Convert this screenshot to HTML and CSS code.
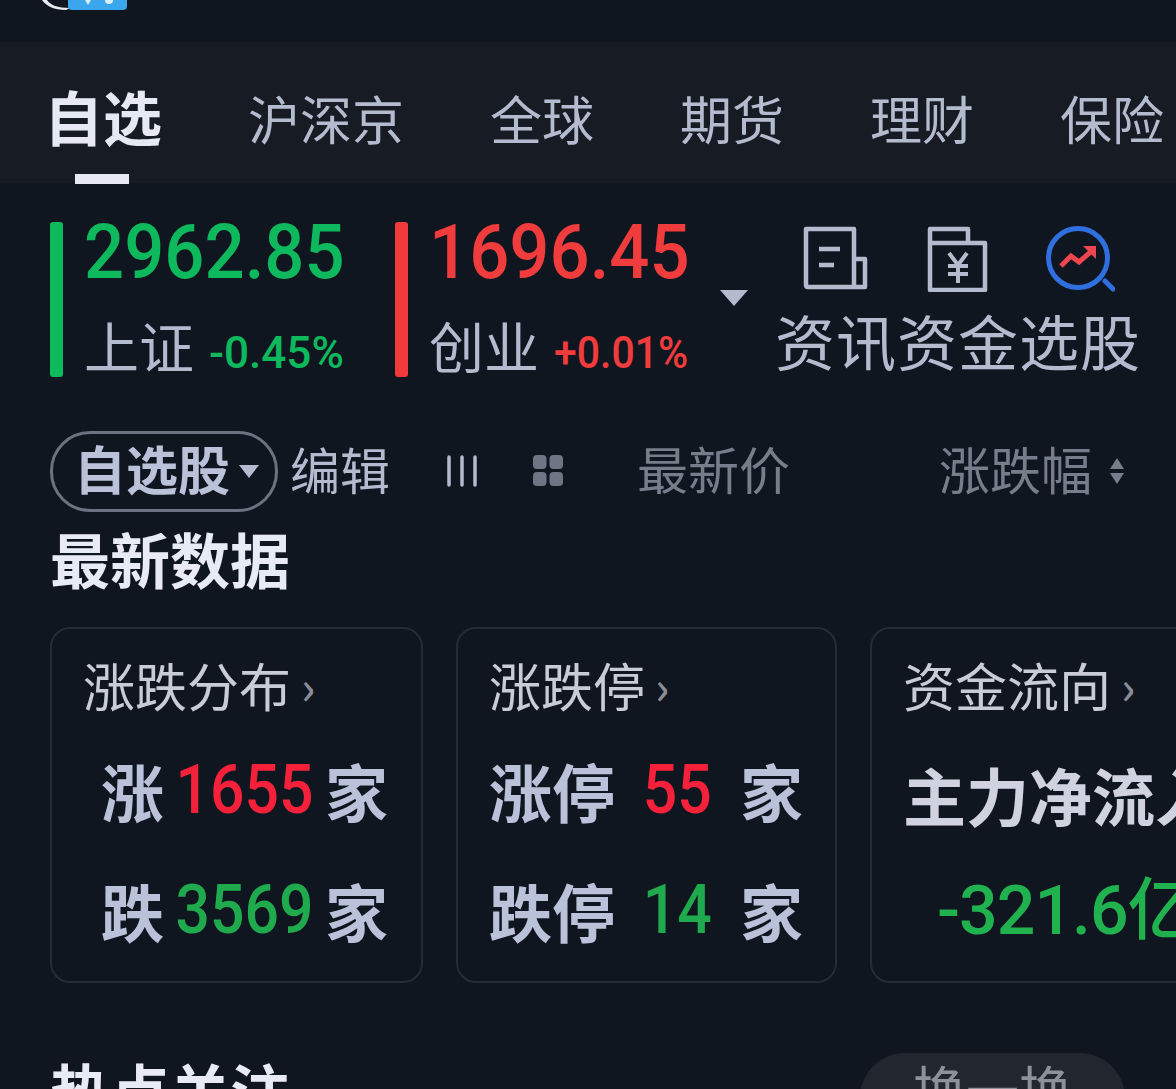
FILE: index.html
```html
<!DOCTYPE html>
<html lang="zh-CN">
<head>
  <meta charset="UTF-8" />
  <meta name="viewport" content="width=device-width, initial-scale=1.0" />
  <title>自选</title>
  <link rel="stylesheet" href="styles.css">
</head>
<body>
  <div class="page">
    <!-- top strip, logo is cut off by the screen edge -->
    <div class="topbar">
      <svg class="logo" width="90" height="12" viewBox="0 0 90 12">
        <path d="M2 0C6 6 14 10 26 10L30 8C18 8 10 5 7 0Z" fill="#e8eaf0"/>
        <path d="M28 0H87V6Q87 10 83 10H32Q28 10 28 6Z" fill="#3aa6ee"/>
        <path d="M45 0L48 5L51 0Z" fill="#d8eefc"/>
        <circle cx="69" cy="0" r="4" fill="#d8eefc"/>
      </svg>
    </div>

    <div class="tabs">
      <div class="tab active">自选</div>
      <div class="tab">沪深京</div>
      <div class="tab">全球</div>
      <div class="tab">期货</div>
      <div class="tab">理财</div>
      <div class="tab">保险</div>
    </div>

    <div class="quotes">
      <div class="index">
        <div class="bar bar-green"></div>
        <div>
          <div class="price green">2962.85</div>
          <div class="index-sub"><span class="index-name">上证</span><span class="pct green">-0.45%</span></div>
        </div>
      </div>
      <div class="index">
        <div class="bar bar-red"></div>
        <div>
          <div class="price red">1696.45</div>
          <div class="index-sub"><span class="index-name">创业</span><span class="pct red">+0.01%</span></div>
        </div>
      </div>
      <div class="more-arrow"></div>
      <div class="shortcuts">
        <div class="shortcut">
          <svg width="66" height="66" viewBox="0 0 66 66" fill="none" stroke="#b4bbce" stroke-width="4.500" stroke-linejoin="round">
            <path d="M3 3H51V61H5Q3 61 3 59Z"/>
            <path d="M51 33H62V61H51"/>
            <path d="M16 23H37M16 39H31"/>
          </svg>
          <span>资讯</span>
        </div>
        <div class="shortcut">
          <svg width="66" height="66" viewBox="0 0 66 66" fill="none" stroke="#b4bbce" stroke-width="4.500" stroke-linejoin="round">
            <path d="M5 17V3H43V17"/>
            <path d="M5 17H60V64H5Z"/>
            <path d="M24 27L33 39L42 27M23 40H43M23 48H43M33 39V57" stroke-width="4"/>
          </svg>
          <span>资金</span>
        </div>
        <div class="shortcut">
          <svg width="70" height="66" viewBox="0 0 70 66" fill="none">
            <circle cx="33" cy="32" r="29.500" stroke="#2f6fe0" stroke-width="5"/>
            <path d="M60 55L68 63" stroke="#2f6fe0" stroke-width="5" stroke-linecap="round"/>
            <path d="M16 40L26 30L34 36L49 23" stroke="#ee4650" stroke-width="5"/>
            <path d="M38 20H51V33Z" fill="#ee4650"/>
          </svg>
          <span>选股</span>
        </div>
      </div>
    </div>

    <div class="toolbar">
      <div class="pill">自选股<i class="pill-arrow"></i></div>
      <div class="edit">编辑</div>
      <svg class="icon-lines" width="32" height="32" viewBox="0 0 32 32" stroke="#b4bbce" stroke-width="3.500" stroke-linecap="round">
        <path d="M3 2V30M16 2V30M29 2V30"/>
      </svg>
      <svg class="icon-grid" width="30" height="32" viewBox="0 0 30 32" fill="#6f7585">
        <rect width="13.500" height="14" rx="4"/>
        <rect x="16.500" width="13.500" height="14" rx="4"/>
        <rect y="17" width="13.500" height="14" rx="4"/>
        <rect x="16.500" y="17" width="13.500" height="14" rx="4"/>
      </svg>
      <div class="col-head col-price">最新价</div>
      <div class="col-head col-change">涨跌幅</div>
      <div class="sort"><i class="sort-up"></i><i class="sort-down"></i></div>
    </div>

    <h2 class="section-title">最新数据</h2>

    <div class="cards">
      <div class="card card-dist">
        <div class="card-title">涨跌分布<span class="chev">›</span></div>
        <div class="row"><b>涨</b><span class="num num-red">1655</span><b>家</b></div>
        <div class="row"><b>跌</b><span class="num num-green">3569</span><b>家</b></div>
      </div>
      <div class="card card-limit">
        <div class="card-title">涨跌停<span class="chev">›</span></div>
        <div class="row"><b>涨停</b><span class="num num-red">55</span><b>家</b></div>
        <div class="row"><b>跌停</b><span class="num num-green">14</span><b>家</b></div>
      </div>
      <div class="card card-flow">
        <div class="card-title">资金流向<span class="chev">›</span></div>
        <div class="flow-label">主力净流入</div>
        <div class="flow-value">-321.6亿</div>
      </div>
    </div>

    <div class="hot">
      <h2 class="section-title">热点关注</h2>
      <div class="swap">换一换</div>
    </div>
  </div>
</body>
</html>
```
FILE: styles.css
```css
* { margin: 0; padding: 0; box-sizing: border-box; }
html, body {
  height: 100%;
  overflow: hidden;
  background: #10161f;
  font-family: "Noto Sans CJK SC", "Noto Sans", sans-serif;
  color: #b4bbce;
}
.page {
  width: 1176px;
  height: 1089px;
  overflow: hidden;
}

/* top strip */
.topbar {
  height: 42px;
  padding-left: 40px;
}
.logo { display: block; }

/* tabs */
.tabs {
  height: 141px;
  background: #171b24;
  display: flex;
  align-items: center;
  gap: 86px;
  padding: 10px 0 0 44px;
  white-space: nowrap;
}
.tab {
  position: relative;
  font-size: 52px;
  line-height: 70px;
  color: #b4bbce;
  flex: none;
}
.tab.active {
  font-size: 59px;
  font-weight: 700;
  color: #e6e8f4;
  margin-top: -4px;
}
.tab.active::after {
  content: "";
  position: absolute;
  left: 31px;
  top: 93px;
  width: 54px;
  height: 10px;
  background: #e6e8f4;
}

/* index quotes */
.quotes {
  display: flex;
  padding: 39px 0 0 50px;
  height: 247px;
}
.index {
  display: flex;
  gap: 21px;
  width: 345px;
}
.bar {
  width: 13px;
  height: 155px;
  border-radius: 3px;
  flex: none;
}
.bar-green { background: #0dbb5c; }
.bar-red { background: #f13a3a; }
.price {
  font-family: Roboto, sans-serif;
  font-size: 76px;
  font-weight: 500;
  line-height: 60px;
  white-space: nowrap;
  transform: scaleX(.93);
  transform-origin: left center;
}
.green { color: #0eb95d; }
.red { color: #f03c3c; }
.index-sub {
  display: flex;
  align-items: baseline;
  margin-top: 29px;
  gap: 15px;
}
.index-name {
  font-size: 55px;
  line-height: 66px;
  color: #b4bbce;
}
.pct {
  font-family: Roboto, sans-serif;
  font-size: 45px;
  font-weight: 500;
  white-space: nowrap;
  transform: scaleX(.98);
  transform-origin: left center;
}
.pct.red { transform: scaleX(.91); }
.more-arrow {
  width: 0;
  height: 0;
  margin: 68px 0 0 -20px;
  border-left: 14px solid transparent;
  border-right: 14px solid transparent;
  border-top: 16px solid #b4bbce;
}
.shortcuts {
  display: flex;
  margin-left: 27px;
  margin-top: 4px;
}
.shortcut {
  width: 122px;
  display: flex;
  flex-direction: column;
  align-items: center;
  font-size: 60px;
  line-height: 76px;
  white-space: nowrap;
}
.shortcut svg { margin-bottom: 10px; }
.shortcut span { letter-spacing: 1px; }

/* toolbar under quotes */
.toolbar {
  display: flex;
  align-items: center;
  height: 82px;
  margin-bottom: 6px;
  padding-left: 50px;
}
.pill {
  width: 228px;
  height: 81px;
  border: 3px solid #6c7280;
  border-radius: 40px;
  display: flex;
  align-items: center;
  padding: 0 0 8px 21px;
  font-size: 52px;
  font-weight: 700;
  color: #b9c2d8;
  flex: none;
}
.pill-arrow {
  margin: 8px 0 0 9px;
  border-left: 10px solid transparent;
  border-right: 10px solid transparent;
  border-top: 13px solid #b4bbce;
}
.edit {
  font-size: 50px;
  margin: 0 0 6px 12px;
  flex: none;
}
.icon-lines { margin-left: 56px; flex: none; }
.icon-grid { margin-left: 55px; flex: none; }
.col-head {
  font-size: 51px;
  color: #777d8b;
  margin-bottom: 6px;
  flex: none;
}
.col-price { margin-left: 74px; }
.col-change { margin-left: 149px; }
.sort { margin-left: 18px; display: flex; flex-direction: column; gap: 4px; }
.sort-up {
  border-left: 7px solid transparent;
  border-right: 7px solid transparent;
  border-bottom: 11px solid #777d8b;
}
.sort-down {
  border-left: 7px solid transparent;
  border-right: 7px solid transparent;
  border-top: 11px solid #777d8b;
}

.section-title {
  font-size: 60px;
  font-weight: 700;
  line-height: 80px;
  color: #e8eaf6;
  padding-left: 50px;
}

/* data cards */
.cards {
  display: flex;
  gap: 33px;
  margin-top: 29px;
  padding-left: 50px;
}
.card {
  height: 356px;
  border: 2px solid #262c36;
  border-radius: 20px;
  flex: none;
  padding: 22px 0 0 31px;
}
.card-dist { width: 373px; }
.card-limit { width: 381px; }
.card-flow { width: 340px; overflow: hidden; white-space: nowrap; }
.card-title {
  font-size: 52px;
  line-height: 68px;
  color: #c8ccd8;
  display: flex;
  align-items: center;
}
.chev {
  color: #8a8d96;
  font-size: 46px;
  font-weight: 500;
  line-height: 60px;
  margin-left: 10px;
}
.row {
  display: flex;
  align-items: center;
  justify-content: space-between;
  height: 120px;
  font-size: 63px;
  color: #b9c2d8;
}
.card-title + .row { margin-top: 10px; }
.row b { font-weight: 700; }
.card-dist .row { padding: 0 33px 0 18px; }
.card-limit .row { padding: 0 32px 0 0; }
.num {
  font-family: Roboto, sans-serif;
  font-size: 69px;
  font-weight: 500;
  transform: scaleX(.88);
}
.num-red { color: #f5213a; }
.num-green { color: #1faa4e; }
.flow-label {
  margin-top: 25px;
  font-size: 63px;
  font-weight: 700;
  line-height: 100px;
  color: #d0d2e0;
}
.flow-value {
  font-family: Roboto, "Noto Sans CJK SC", sans-serif;
  font-size: 68px;
  font-weight: 500;
  letter-spacing: -1px;
  line-height: 110px;
  color: #1fb24f;
  margin-top: 12px;
  padding-left: 34px;
}

.hot {
  display: flex;
  justify-content: space-between;
  align-items: flex-start;
  margin-top: 70px;
}
.hot .section-title { margin-top: -4px; }
.swap {
  width: 265px;
  height: 90px;
  margin-right: 51px;
  border-radius: 45px;
  background: #22262f;
  color: #8e9198;
  font-size: 53px;
  line-height: 70px;
  text-align: center;
}
```
